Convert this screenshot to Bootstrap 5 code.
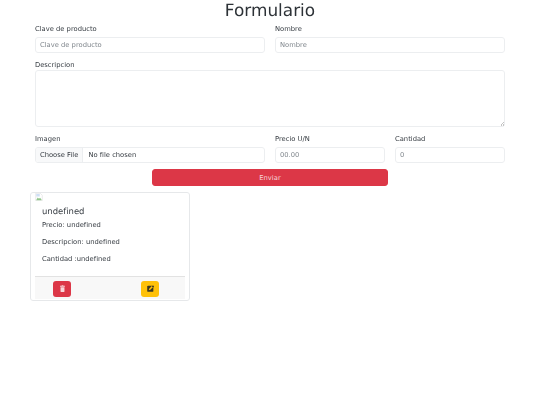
<!DOCTYPE html>
<html lang="es">
<head>
<meta charset="utf-8">
<title>Formulario</title>
<link href="https://cdn.jsdelivr.net/npm/bootstrap@5.3.0/dist/css/bootstrap.min.css" rel="stylesheet">
<style>
html { font-size: 6.76px; }
body { font-family: "DejaVu Sans", sans-serif; font-size: 6.76px; color: #343a40; background: #fff; text-rendering: geometricPrecision; }
.page-wrap { padding: 0 35px; opacity: .99; }
.page-title { font-family: "DejaVu Sans", sans-serif; font-size: 16.9px; line-height: 20px; height: 23px; margin: 0; font-weight: 400; text-align: center; color: #2b3035; }
.form-rows { --bs-gutter-x: 10px; --bs-gutter-y: 0; }
.fld-label { display: block; font-size: 6.76px; line-height: 11px; padding-top: 1px; margin: 0 0 2px; }
.lbl-tight { margin-bottom: -1px; }
.fld-input { height: 16px; min-height: 16px; font-size: 6.76px; line-height: 11px; padding: 2px 4px; border-color: #eceef0; border-radius: 3px; margin-bottom: 6px; color: #343a40; }
.fld-input::placeholder { color: #80878d; }
.fld-area { height: 57px; resize: vertical; }
.fld-area::-webkit-resizer { background: linear-gradient(135deg, transparent 60%, #c4c4c4 60%, #c4c4c4 70%, transparent 70%, transparent 80%, #c4c4c4 80%, #c4c4c4 90%, transparent 90%) no-repeat right bottom / 5px 5px; }
.fld-file { display: flex; align-items: stretch; padding: 0; overflow: hidden; }
.file-btn { display: flex; align-items: center; padding: 0 4px; background: #f8f9fa; border-right: 1px solid #eceef0; }
.file-name { display: flex; align-items: center; padding: 0 5px; }
.send-wrap { padding: 0 117px; margin-bottom: 6px; }
.send-btn { height: 17px; padding: 1px 0 0; font-size: 6.76px; line-height: 15px; border-radius: 3px; --bs-btn-color: #f6d5d8; }
.card-row { --bs-gutter-x: 10px; }
.prod-card { width: 160px; height: 109px; padding: 0 4px; border-color: #e6e8ea; border-radius: 3px; --bs-card-bg: transparent; background: transparent; }
.img-slot { height: 9px; line-height: 0; }
.img-slot svg { display: block; width: 8px; height: 8px; }
.prod-body { padding: 3px 7px 0; }
.prod-title { font-size: 8.45px; line-height: 12px; margin: 0 0 3px; font-weight: 400; }
.prod-text { font-size: 6.76px; line-height: 11px; margin: 0 0 6px; }
.prod-foot { height: 23px; padding: 1px 26px 0 18px; margin-bottom: 1px; background: #f8f8f8; border-top: 1px solid #e2e2e2; }
.act-btn { width: 18px; height: 16px; padding: 0; border: 0; border-radius: 3px; }
.act-btn svg { width: 7px; height: 7px; }
</style>
</head>
<body>
<div class="page-wrap">
  <h1 class="page-title">Formulario</h1>
  <form>
    <div class="row form-rows">
      <div class="col-6">
        <label class="fld-label" for="clave">Clave de producto</label>
        <input class="form-control fld-input" id="clave" type="text" placeholder="Clave de producto">
      </div>
      <div class="col-6">
        <label class="fld-label" for="nombre">Nombre</label>
        <input class="form-control fld-input" id="nombre" type="text" placeholder="Nombre">
      </div>
      <div class="col-12">
        <label class="fld-label lbl-tight" for="desc">Descripcion</label>
        <textarea class="form-control fld-input fld-area" id="desc"></textarea>
      </div>
      <div class="col-6">
        <span class="fld-label">Imagen</span>
        <div class="form-control fld-input fld-file"><span class="file-btn">Choose File</span><span class="file-name">No file chosen</span></div>
      </div>
      <div class="col-3">
        <label class="fld-label" for="precio">Precio U/N</label>
        <input class="form-control fld-input" id="precio" type="text" placeholder="00.00">
      </div>
      <div class="col-3">
        <label class="fld-label" for="cant">Cantidad</label>
        <input class="form-control fld-input" id="cant" type="text" placeholder="0">
      </div>
    </div>
    <div class="d-grid send-wrap">
      <button class="btn btn-danger send-btn" type="button">Enviar</button>
    </div>
  </form>
  <div class="row card-row">
    <div class="col-12 px-0">
      <div class="card prod-card">
        <div class="img-slot">
          <svg viewBox="0 0 16 16" aria-hidden="true"><path d="M1.500 .5h9l4 4v11h-13z" fill="#fff" stroke="#d4d4d4"/><path d="M2.500 14l3-5 2.500 2.500 2-2 3 3.500v1.500h-10.500z" fill="#8fc58a"/><path d="M2.500 2h7v5h-7z" fill="#cfdff5"/></svg>
        </div>
        <div class="prod-body">
          <h5 class="prod-title">undefined</h5>
          <p class="prod-text">Precio: undefined</p>
          <p class="prod-text">Descripcion: undefined</p>
          <p class="prod-text">Cantidad :undefined</p>
        </div>
        <div class="prod-foot mt-auto d-flex justify-content-between align-items-center">
          <button class="btn btn-danger act-btn d-flex align-items-center justify-content-center" type="button" aria-label="Eliminar">
            <svg viewBox="0 0 16 16" fill="#f8d7da"><path d="M2.500 1.500h3.500l.5-1h3l.5 1h3.500v2.500h-11zM3.500 5h9v9a2 2 0 0 1-2 2h-5a2 2 0 0 1-2-2z"/></svg>
          </button>
          <button class="btn btn-warning act-btn d-flex align-items-center justify-content-center" type="button" aria-label="Editar">
            <svg viewBox="0 0 16 16"><rect x=".5" y="1.500" width="14" height="14" rx="2" fill="#3a3520"/><path d="M4 12l1-3.500 6-6 2.500 2.500-6 6z" fill="#ffc107"/><path d="M13 1.500a1.400 1.400 0 0 1 2 0l.5.5a1.400 1.400 0 0 1 0 2l-1.500 1.500-2.500-2.500z" fill="#3a3520"/></svg>
          </button>
        </div>
      </div>
    </div>
  </div>
</div>
<script src="https://cdn.jsdelivr.net/npm/bootstrap@5.3.0/dist/js/bootstrap.bundle.min.js"></script>
</body>
</html>
